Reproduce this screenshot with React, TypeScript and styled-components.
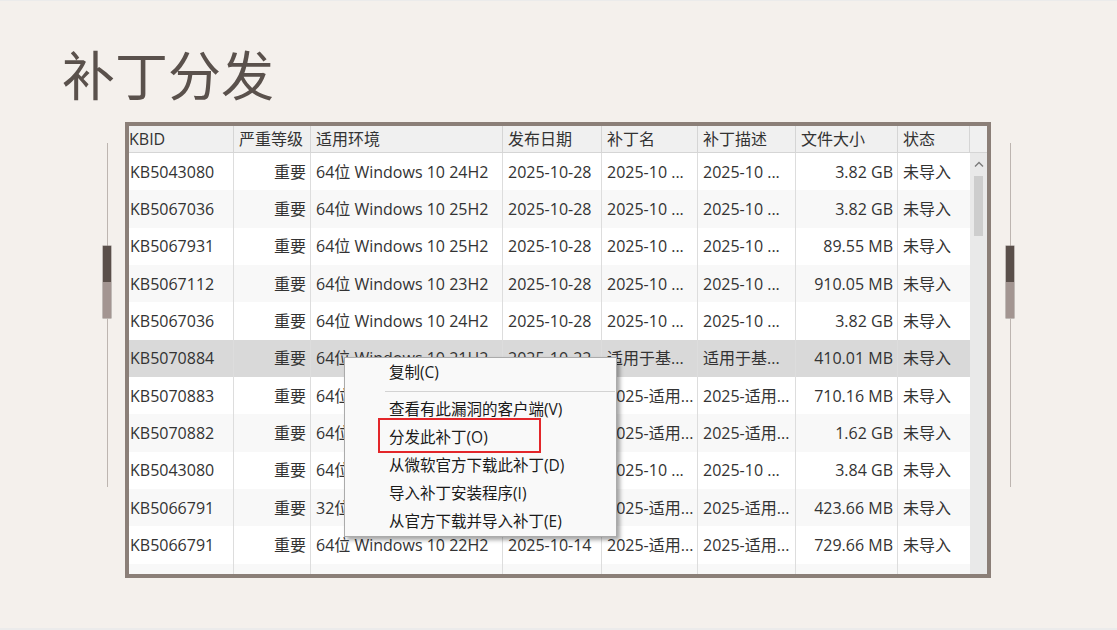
import React from "react";
import styled, { createGlobalStyle } from "styled-components";

const GlobalStyle = createGlobalStyle`
  html, body { margin: 0; padding: 0; }
  body { background: #f4f0ec; }
`;

const FONT = `"Open Sans", "Noto Sans CJK SC", sans-serif`;
const COLS = [105, 77, 192, 99, 96, 98, 102, 72];
const ALIGN: ("left" | "right")[] = ["left", "right", "left", "left", "left", "left", "right", "left"];
const HEADERS = ["KBID", "严重等级", "适用环境", "发布日期", "补丁名", "补丁描述", "文件大小", "状态"];

type Row = string[];
const ROWS: Row[] = [
  ["KB5043080", "重要", "64位 Windows 10 24H2", "2025-10-28", "2025-10 ...", "2025-10 ...", "3.82 GB", "未导入"],
  ["KB5067036", "重要", "64位 Windows 10 25H2", "2025-10-28", "2025-10 ...", "2025-10 ...", "3.82 GB", "未导入"],
  ["KB5067931", "重要", "64位 Windows 10 25H2", "2025-10-28", "2025-10 ...", "2025-10 ...", "89.55 MB", "未导入"],
  ["KB5067112", "重要", "64位 Windows 10 23H2", "2025-10-28", "2025-10 ...", "2025-10 ...", "910.05 MB", "未导入"],
  ["KB5067036", "重要", "64位 Windows 10 24H2", "2025-10-28", "2025-10 ...", "2025-10 ...", "3.82 GB", "未导入"],
  ["KB5070884", "重要", "64位 Windows 10 21H2", "2025-10-22", "适用于基...", "适用于基...", "410.01 MB", "未导入"],
  ["KB5070883", "重要", "64位 Windows 10 21H2", "2025-10-22", "2025-适用...", "2025-适用...", "710.16 MB", "未导入"],
  ["KB5070882", "重要", "64位 Windows 10 21H2", "2025-10-22", "2025-适用...", "2025-适用...", "1.62 GB", "未导入"],
  ["KB5043080", "重要", "64位 Windows 10 24H2", "2025-10-28", "2025-10 ...", "2025-10 ...", "3.84 GB", "未导入"],
  ["KB5066791", "重要", "32位 Windows 10 22H2", "2025-10-14", "2025-适用...", "2025-适用...", "423.66 MB", "未导入"],
  ["KB5066791", "重要", "64位 Windows 10 22H2", "2025-10-14", "2025-适用...", "2025-适用...", "729.66 MB", "未导入"],
  ["KB5066790", "重要", "64位 Windows 10 21H2", "2025-10-14", "2025-适用...", "2025-适用...", "1.24 GB", "未导入"],
];
const SELECTED = 5;

const MENU = [
  "复制(C)",
  "-",
  "查看有此漏洞的客户端(V)",
  "分发此补丁(O)",
  "从微软官方下载此补丁(D)",
  "导入补丁安装程序(I)",
  "从官方下载并导入补丁(E)",
];

const Slide = styled.div`
  width: 1117px;
  height: 630px;
  box-sizing: border-box;
  background: #f4f0ec;
  border-top: 1px solid #ebebeb;
  border-bottom: 2px solid #ebebeb;
  overflow: hidden;
`;

const Title = styled.h1`
  margin: 0;
  padding: 45px 0 0 62px;
  font-family: "Noto Sans CJK SC", sans-serif;
  font-weight: 400;
  font-size: 53px;
  line-height: 55px;
  color: #5a514c;
`;

const Stage = styled.div`
  display: flex;
  align-items: flex-start;
  margin-top: 21px;
  padding-left: 103px;
`;

const Ornament = styled.div<{ $gap: number }>`
  display: flex;
  flex-direction: column;
  align-items: center;
  width: 8px;
  margin-top: 21px;
  margin-left: ${(p) => p.$gap}px;
`;

const OrnLine = styled.div<{ $h: number }>`
  width: 1px;
  height: ${(p) => p.$h}px;
  background: #bdb5b0;
`;

const OrnBlock = styled.div`
  width: 8px;
  display: flex;
  flex-direction: column;
  box-shadow: 0 0 0 0.5px #8d8480;
`;

const OrnHalf = styled.div<{ $dark?: boolean }>`
  height: 36px;
  background: ${(p) => (p.$dark ? "#5a4f4a" : "#a39591")};
`;

const Frame = styled.div`
  position: relative;
  margin-left: 14px;
  width: 866px;
  height: 456px;
  box-sizing: border-box;
  border: 4px solid #8b7f78;
  background: #ffffff;
  overflow: hidden;
  display: flex;
  flex-direction: column;
  font-family: ${FONT};
  font-size: 16px;
  color: #333333;
`;

const Header = styled.div`
  display: grid;
  grid-template-columns: ${COLS.map((c) => c + "px").join(" ")} 1fr;
  height: 27px;
  box-sizing: border-box;
  background: #f0f0f0;
  border-bottom: 1px solid #d5d5d5;
`;

const HeaderCell = styled.div<{ $first?: boolean }>`
  display: flex;
  align-items: center;
  padding-left: ${(p) => (p.$first ? 0 : 5)}px;
  border-right: 1px solid #d5d5d5;
  white-space: nowrap;
  overflow: hidden;
  line-height: 1;
  &:last-child { border-right: none; }
`;

const Body = styled.div`
  flex: 1;
  display: flex;
  overflow: hidden;
`;

const RowList = styled.div`
  width: ${COLS.reduce((a, b) => a + b, 0)}px;
  display: flex;
  flex-direction: column;
`;

const TableRow = styled.div<{ $alt: boolean; $sel: boolean }>`
  display: grid;
  grid-template-columns: ${COLS.map((c) => c + "px").join(" ")};
  height: 37.33px;
  flex: none;
  background: ${(p) => (p.$sel ? "#d9d9d9" : p.$alt ? "#f8f8f8" : "#ffffff")};
`;

const Cell = styled.div<{ $align: "left" | "right"; $first?: boolean }>`
  display: flex;
  align-items: center;
  justify-content: ${(p) => (p.$align === "right" ? "flex-end" : "flex-start")};
  padding-left: ${(p) => (p.$first ? 1 : 5)}px;
  padding-right: 4px;
  border-right: 1px solid #dddddd;
  white-space: nowrap;
  overflow: hidden;
  line-height: 1;
  &:last-child { border-right: none; }
`;

const ScrollBar = styled.div`
  flex: 1;
  background: #e9e9e9;
  display: flex;
  flex-direction: column;
  align-items: center;
  padding-top: 8px;
`;

const Thumb = styled.div`
  margin-top: 8px;
  width: 9px;
  height: 60px;
  background: #cdcdcd;
`;

const Menu = styled.div`
  position: absolute;
  left: 215px;
  top: 231px;
  width: 273px;
  height: 180px;
  box-sizing: border-box;
  background: #f9f9f9;
  border: 1px solid #ababab;
  box-shadow: 3px 3px 4px rgba(0, 0, 0, 0.35);
  padding-top: 1px;
  display: flex;
  flex-direction: column;
`;

const MenuItem = styled.div`
  height: 28px;
  flex: none;
  display: flex;
  align-items: center;
  padding-left: 44px;
  font-size: 15.5px;
  color: #1a1a1a;
  white-space: nowrap;
  line-height: 1;
`;

const MenuSep = styled.div`
  height: 1px;
  flex: none;
  margin: 4px 1px 4px 40px;
  background: #d3d3d3;
`;

const Highlight = styled.div`
  position: absolute;
  left: 33px;
  top: 60px;
  width: 163px;
  height: 35px;
  box-sizing: border-box;
  border: 2px solid #e3262a;
`;

const Decoration = ({ gap }: { gap: number }) => (
  <Ornament $gap={gap}>
    <OrnLine $h={103} />
    <OrnBlock>
      <OrnHalf $dark />
      <OrnHalf />
    </OrnBlock>
    <OrnLine $h={169} />
  </Ornament>
);

export default function App() {
  return (
    <>
      <GlobalStyle />
      <Slide>
        <Title>补丁分发</Title>
        <Stage>
          <Decoration gap={0} />
          <Frame>
            <Header>
              {HEADERS.map((h, i) => (
                <HeaderCell key={h} $first={i === 0}>
                  {h}
                </HeaderCell>
              ))}
              <HeaderCell />
            </Header>
            <Body>
              <RowList>
                {ROWS.map((r, ri) => (
                  <TableRow key={ri} $alt={ri % 2 === 1} $sel={ri === SELECTED}>
                    {r.map((v, ci) => (
                      <Cell key={ci} $align={ALIGN[ci]} $first={ci === 0}>
                        {v}
                      </Cell>
                    ))}
                  </TableRow>
                ))}
              </RowList>
              <ScrollBar>
                <svg width="10" height="7" viewBox="0 0 10 7">
                  <path d="M1 5.5 L5 1.5 L9 5.5" fill="none" stroke="#7a7a7a" strokeWidth="1.4" />
                </svg>
                <Thumb />
              </ScrollBar>
            </Body>
            <Menu>
              {MENU.map((m, i) => (m === "-" ? <MenuSep key={i} /> : <MenuItem key={i}>{m}</MenuItem>))}
              <Highlight />
            </Menu>
          </Frame>
          <Decoration gap={15} />
        </Stage>
      </Slide>
    </>
  );
}
